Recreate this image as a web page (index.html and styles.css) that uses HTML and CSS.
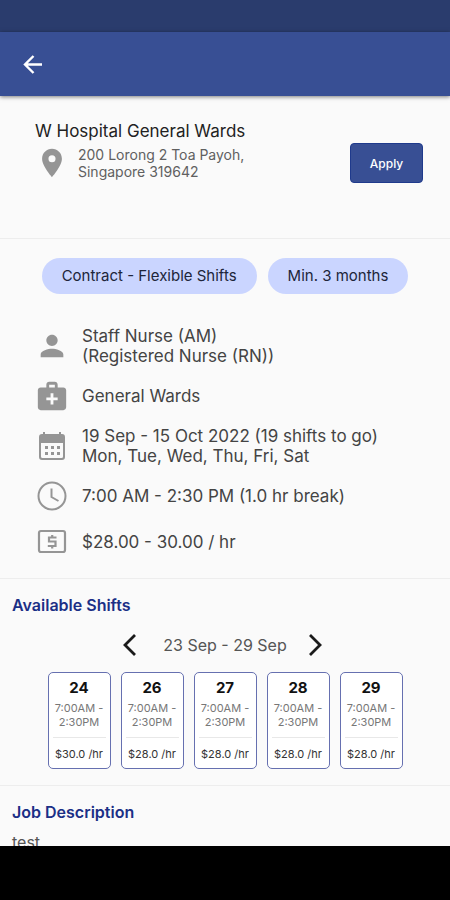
FILE: index.html
```html
<!DOCTYPE html>
<html lang="en">
<head>
<meta charset="utf-8">
<meta name="viewport" content="width=device-width, initial-scale=1">
<title>W Hospital General Wards</title>
<link rel="stylesheet" href="styles.css">
</head>
<body>
<div class="status-bar"></div>
<header class="app-bar">
  <button class="icon-button" type="button" aria-label="Back">
    <svg width="24" height="24" viewBox="0 0 24 24" fill="none" stroke="currentColor" stroke-width="2.4"><path d="M21 12.500H4M12.500 4L4 12.500l8.500 8.500"/></svg>
  </button>
</header>
<main class="content">
  <section class="employer">
    <div class="employer-info">
      <h1 class="employer-name">W Hospital General Wards</h1>
      <div class="address">
        <svg class="address-icon" width="34" height="34" viewBox="0 0 24 24" fill="currentColor"><path d="M12 2C8.130 2 5 5.130 5 9c0 5.250 7 13 7 13s7-7.750 7-13c0-3.870-3.130-7-7-7zm0 9.500a2.500 2.500 0 0 1 0-5 2.500 2.500 0 0 1 0 5z"/></svg>
        <p class="address-text">200 Lorong 2 Toa Payoh,<br>Singapore 319642</p>
      </div>
    </div>
    <button class="apply" type="button">Apply</button>
  </section>
  <section class="job">
    <div class="tags">
      <span class="tag">Contract - Flexible Shifts</span>
      <span class="tag">Min. 3 months</span>
    </div>
    <ul class="details">
      <li class="detail">
        <svg width="34" height="34" viewBox="0 0 24 24" fill="currentColor"><path d="M12 12c2.210 0 4-1.790 4-4s-1.790-4-4-4-4 1.790-4 4 1.790 4 4 4zm0 2c-2.670 0-8 1.340-8 4v2h16v-2c0-2.660-5.330-4-8-4z"/></svg>
        <span>Staff Nurse (AM)<br>(Registered Nurse (RN))</span>
      </li>
      <li class="detail">
        <svg width="34" height="34" viewBox="0 0 24 24" fill="currentColor"><path d="M20 6h-4V4c0-1.100-.9-2-2-2h-4c-1.100 0-2 .9-2 2v2H4c-1.100 0-2 .9-2 2v12c0 1.100.9 2 2 2h16c1.100 0 2-.9 2-2V8c0-1.100-.9-2-2-2zM10 4h4v2h-4V4zm6 11h-3v3h-2v-3H8v-2h3v-3h2v3h3v2z"/></svg>
        <span>General Wards</span>
      </li>
      <li class="detail">
        <svg width="34" height="34" viewBox="0 0 34 34" fill="currentColor"><path fill-rule="evenodd" d="M8 3h2v2h14V3h2v2h1a3 3 0 0 1 3 3v20a3 3 0 0 1-3 3H7a3 3 0 0 1-3-3V8a3 3 0 0 1 3-3h1zM6 14v13.500A1.500 1.500 0 0 0 7.500 29h19a1.500 1.500 0 0 0 1.500-1.500V14z"/><path d="M10 17h3v3h-3zm6 0h3v3h-3zm6 0h3v3h-3zM10 23h3v3h-3zm6 0h3v3h-3zm6 0h3v3h-3z"/></svg>
        <span>19 Sep - 15 Oct 2022 (19 shifts to go)<br>Mon, Tue, Wed, Thu, Fri, Sat</span>
      </li>
      <li class="detail">
        <svg width="34" height="34" viewBox="0 0 34 34" fill="none" stroke="currentColor" stroke-width="2"><circle cx="17" cy="17" r="13.500"/><path d="M16.500 9.500V18l7 4"/></svg>
        <span>7:00 AM - 2:30 PM (1.0 hr break)</span>
      </li>
      <li class="detail">
        <svg width="34" height="34" viewBox="0 0 34 34" fill="none" stroke="currentColor" stroke-width="2.200"><rect x="4" y="6" width="26" height="21" rx="2"/><path d="M21.500 12.500H14v4h6.500v4.500H12.800M17.200 10v2.500M17.200 21v2.500"/></svg>
        <span>$28.00 - 30.00 / hr</span>
      </li>
    </ul>
  </section>
  <section class="shifts">
    <h2 class="section-title">Available Shifts</h2>
    <div class="week">
      <button class="icon-button" type="button" aria-label="Previous week">
        <svg width="24" height="24" viewBox="0 0 24 24" fill="none" stroke="currentColor" stroke-width="2.800"><path d="M15 2L5 12l10 10"/></svg>
      </button>
      <span class="week-range">23 Sep - 29 Sep</span>
      <button class="icon-button" type="button" aria-label="Next week">
        <svg width="24" height="24" viewBox="0 0 24 24" fill="none" stroke="currentColor" stroke-width="2.800"><path d="M4 2l10 10L4 22"/></svg>
      </button>
    </div>
    <div class="days">
      <button class="day" type="button"><span class="date">24</span><span class="time">7:00AM -<br>2:30PM</span><span class="rate">$30.0 /hr</span></button>
      <button class="day" type="button"><span class="date">26</span><span class="time">7:00AM -<br>2:30PM</span><span class="rate">$28.0 /hr</span></button>
      <button class="day" type="button"><span class="date">27</span><span class="time">7:00AM -<br>2:30PM</span><span class="rate">$28.0 /hr</span></button>
      <button class="day" type="button"><span class="date">28</span><span class="time">7:00AM -<br>2:30PM</span><span class="rate">$28.0 /hr</span></button>
      <button class="day" type="button"><span class="date">29</span><span class="time">7:00AM -<br>2:30PM</span><span class="rate">$28.0 /hr</span></button>
    </div>
  </section>
  <section class="description">
    <h2 class="section-title">Job Description</h2>
    <p class="description-text">test</p>
  </section>
</main>
<div class="system-nav"></div>
</body>
</html>
```
FILE: styles.css
```css
* {
  box-sizing: border-box;
}

body {
  display: flex;
  flex-direction: column;
  height: 100vh;
  margin: 0;
  background: #fafafa;
  color: #444;
  font-family: Inter, "Liberation Sans", sans-serif;
  font-size: 17px;
  line-height: 20px;
}

h1,
h2,
p,
ul {
  margin: 0;
  padding: 0;
}

button {
  font-family: inherit;
}

svg {
  display: block;
  flex: none;
}

.status-bar {
  flex: none;
  height: 32px;
  background: #2a3c6d;
}

.app-bar {
  display: flex;
  flex: none;
  align-items: center;
  height: 64px;
  padding: 0 21px;
  background: #384f94;
  color: #fff;
  box-shadow: 0 1px 4px rgba(0, 0, 0, 0.5);
  z-index: 1;
}

.icon-button {
  padding: 0;
  border: 0;
  background: none;
  color: inherit;
}

.content {
  flex: 1;
  min-height: 0;
  overflow: hidden;
}

.employer {
  display: flex;
  align-items: flex-start;
  justify-content: space-between;
  padding: 24px 27px 55px 35px;
  border-bottom: 1px solid #ededed;
}

.employer-name {
  color: #222;
  font-size: 17px;
  font-weight: 400;
  line-height: 22px;
}

.address {
  display: flex;
  gap: 9px;
  margin-top: 4px;
}

.address-icon {
  color: #959595;
}

.address-text {
  color: #606060;
  font-size: 14px;
  line-height: 17px;
}

.apply {
  width: 73px;
  height: 40px;
  margin-top: 23px;
  border: 1px solid #1f3a8c;
  border-radius: 4px;
  background: #384f94;
  color: #fff;
  font-size: 12px;
  font-weight: 500;
}

.job {
  padding: 19px 35px 20px;
  border-bottom: 1px solid #ededed;
}

.tags {
  display: flex;
  justify-content: center;
  gap: 11px;
}

.tag {
  padding: 8px 20px;
  border-radius: 18px;
  background: #cad5ff;
  color: #20253a;
  font-size: 15px;
}

.details {
  display: flex;
  flex-direction: column;
  gap: 14px;
  margin-top: 32px;
  list-style: none;
}

.detail {
  display: flex;
  align-items: center;
  gap: 13px;
}

.detail svg {
  margin: -1px 0;
  color: #959595;
}

.shifts {
  padding: 16px 12px;
  border-bottom: 1px solid #ededed;
}

.section-title {
  color: #1b2f86;
  font-size: 16px;
  font-weight: 600;
  line-height: 20px;
}

.week {
  display: flex;
  align-items: center;
  justify-content: center;
  gap: 19px;
  margin-top: 18px;
  color: #1a1a1a;
}

.week-range {
  color: #555;
  font-size: 16px;
  line-height: 24px;
}

.days {
  display: flex;
  justify-content: center;
  gap: 10px;
  margin-top: 15px;
}

.day {
  display: flex;
  flex-direction: column;
  width: 63px;
  padding: 6px 4px;
  border: 1px solid #6670b0;
  border-radius: 5px;
  background: #fff;
  text-align: center;
}

.date {
  color: #111;
  font-size: 15px;
  font-weight: 700;
  line-height: 18px;
}

.time {
  margin-top: 4px;
  padding-bottom: 8px;
  border-bottom: 1px solid #e8e8e8;
  color: #777;
  font-size: 11px;
  line-height: 14px;
}

.rate {
  margin-top: 8px;
  color: #333;
  font-size: 11px;
  line-height: 16px;
  white-space: nowrap;
}

.description {
  padding: 16px 12px;
}

.description-text {
  margin-top: 10px;
  color: #555;
  font-size: 16px;
}

.system-nav {
  flex: none;
  height: 54px;
  background: #000;
}
```
